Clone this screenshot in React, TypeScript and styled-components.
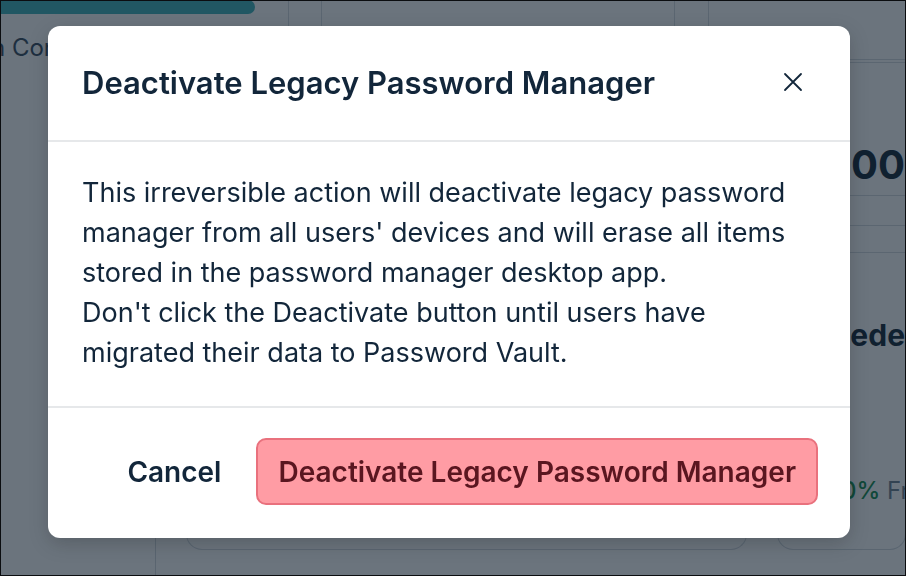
import React from "react";
import styled, { createGlobalStyle } from "styled-components";

const GlobalStyle = createGlobalStyle`
  *, *::before, *::after {
    box-sizing: border-box;
  }
  html, body {
    margin: 0;
    padding: 0;
    width: 906px;
    height: 576px;
    overflow: hidden;
    background: #ffffff;
    font-family: Inter, "Noto Sans", sans-serif;
  }
`;

// background dashboard (dimmed by the overlay)
const Page = styled.div`
  width: 906px;
  height: 576px;
  display: flex;
  flex-direction: column;
  background: #fbfcfd;
  color: #0f2233;
`;

const TopRow = styled.div`
  display: flex;
  height: 60px;
`;

interface ICellProps {
  w?: number;
}

const TopCell = styled.div<ICellProps>`
  width: ${({ w }) => (w ? `${w}px` : "auto")};
  flex: ${({ w }) => (w ? "none" : "1")};
  border-right: 1px solid #d2d8de;
  border-bottom: ${({ w }) => (w ? "none" : "1px solid #d2d8de")};
  display: flex;
  flex-direction: column;
  gap: 19px;
`;

const Progress = styled.div`
  width: 255px;
  height: 14px;
  flex: none;
  background: #3ab0b8;
  border-radius: 0 8px 8px 0;
`;

const Crumb = styled.div`
  margin-left: -9px;
  font-size: 24px;
  line-height: 29px;
  color: #33475b;
  white-space: nowrap;
`;

const Content = styled.div`
  flex: 1;
  display: grid;
  grid-template-columns: 156px 30px 561px 30px 1fr;
`;

const SideRail = styled.div`
  border-right: 1px solid #cfd5db;
`;

const Card = styled.div`
  margin-bottom: 26px;
  border: 1px solid #cfd5db;
  border-top: none;
  border-radius: 0 0 16px 16px;
`;

const RightCard = styled(Card as any)`
  overflow: hidden;
  display: flex;
  flex-direction: column;
  align-items: flex-end;
`;

const Stat = styled.div<{ size: number; top: number }>`
  margin-top: ${({ top }) => top}px;
  font-size: ${({ size }) => size}px;
  line-height: 1.2;
  font-weight: 700;
  white-space: nowrap;
  color: #0f2233;
`;

const Rule = styled.div<{ top: number }>`
  margin-top: ${({ top }) => top}px;
  height: 1px;
  align-self: stretch;
  background: #d2d8de;
`;

const Trend = styled.div`
  align-self: flex-start;
  margin: 124px 0 0 53px;
  font-size: 24px;
  line-height: 28px;
  white-space: nowrap;
  color: #6b7b8c;
  & b {
    color: #0f8a4a;
    font-weight: 500;
  }
`;

// overlay + dialog
const Overlay = styled.div`
  position: fixed;
  inset: 0;
  background: rgba(18, 32, 46, 0.62);
  padding: 26px 0 0 48px;
`;

const Frame = styled.div`
  position: fixed;
  inset: 0;
  border: 1px solid #0b0d10;
  pointer-events: none;
`;

const Dialog = styled.div`
  width: 802px;
  background: #ffffff;
  border-radius: 12px;
  box-shadow: 0 6px 20px rgba(0, 0, 0, 0.18);
  overflow: hidden;
`;

const DialogHeader = styled.div`
  height: 116px;
  display: flex;
  align-items: center;
  justify-content: space-between;
  padding: 0 46px 2px 34px;
  border-bottom: 2px solid #e6e8ea;
`;

const Title = styled.h2`
  margin: 0;
  font-size: 31px;
  font-weight: 600;
  color: #12263a;
`;

const CloseButton = styled.button`
  width: 22px;
  height: 22px;
  padding: 0;
  border: none;
  background: none;
  display: flex;
  align-items: center;
  justify-content: center;
  cursor: pointer;
`;

const DialogBody = styled.div`
  padding: 31px 48px 33px 34px;
  font-size: 27px;
  line-height: 40px;
  color: #12263a;
  border-bottom: 2px solid #e6e8ea;
`;

const DialogFooter = styled.div`
  height: 130px;
  display: flex;
  align-items: center;
  justify-content: flex-end;
  gap: 12px;
  padding: 0 32px 3px 0;
`;

interface IButtonProps {
  danger?: boolean;
}

const ActionButton = styled.button<IButtonProps>`
  height: 67px;
  padding: 0 ${({ danger }) => (danger ? "20px" : "21px")};
  font-family: Inter, "Noto Sans", sans-serif;
  font-size: 28px;
  font-weight: 600;
  border-radius: 10px;
  cursor: pointer;
  color: ${({ danger }) => (danger ? "#5a1620" : "#12263a")};
  background: ${({ danger }) => (danger ? "#ff9ca4" : "transparent")};
  border: 2px solid ${({ danger }) => (danger ? "#e9717d" : "transparent")};
`;

const App = () => {
  return (
    <>
      <GlobalStyle />
      <Page>
        <TopRow>
          <TopCell w={289}>
            <Progress />
            <Crumb>n Console</Crumb>
          </TopCell>
          <TopCell w={33} />
          <TopCell w={353} />
          <TopCell w={34} />
          <TopCell />
        </TopRow>
        <Content>
          <SideRail />
          <div />
          <Card />
          <div />
          <RightCard>
            <Rule top={2} />
            <Stat size={40} top={78}>1,000</Stat>
            <Rule top={6} />
            <Rule top={29} />
            <Rule top={26} />
            <Stat size={30} top={64}>Exceede</Stat>
            <Trend>
              <b>10%</b> From
            </Trend>
          </RightCard>
        </Content>
      </Page>
      <Overlay>
        <Dialog role="dialog" aria-modal="true">
          <DialogHeader>
            <Title>Deactivate Legacy Password Manager</Title>
            <CloseButton aria-label="Close">
              <svg width="20" height="20" viewBox="0 0 20 20" fill="none">
                <path
                  d="M2 2 L18 18 M18 2 L2 18"
                  stroke="#12263a"
                  strokeWidth="1.8"
                  strokeLinecap="round"
                />
              </svg>
            </CloseButton>
          </DialogHeader>
          <DialogBody>
            This irreversible action will deactivate legacy password manager from all users' devices and
            will erase all items stored in the password manager desktop app.
            <br />
            Don't click the Deactivate button until users have migrated their data to Password Vault.
          </DialogBody>
          <DialogFooter>
            <ActionButton>Cancel</ActionButton>
            <ActionButton danger>Deactivate Legacy Password Manager</ActionButton>
          </DialogFooter>
        </Dialog>
      </Overlay>
      <Frame />
    </>
  );
};

export default App;
